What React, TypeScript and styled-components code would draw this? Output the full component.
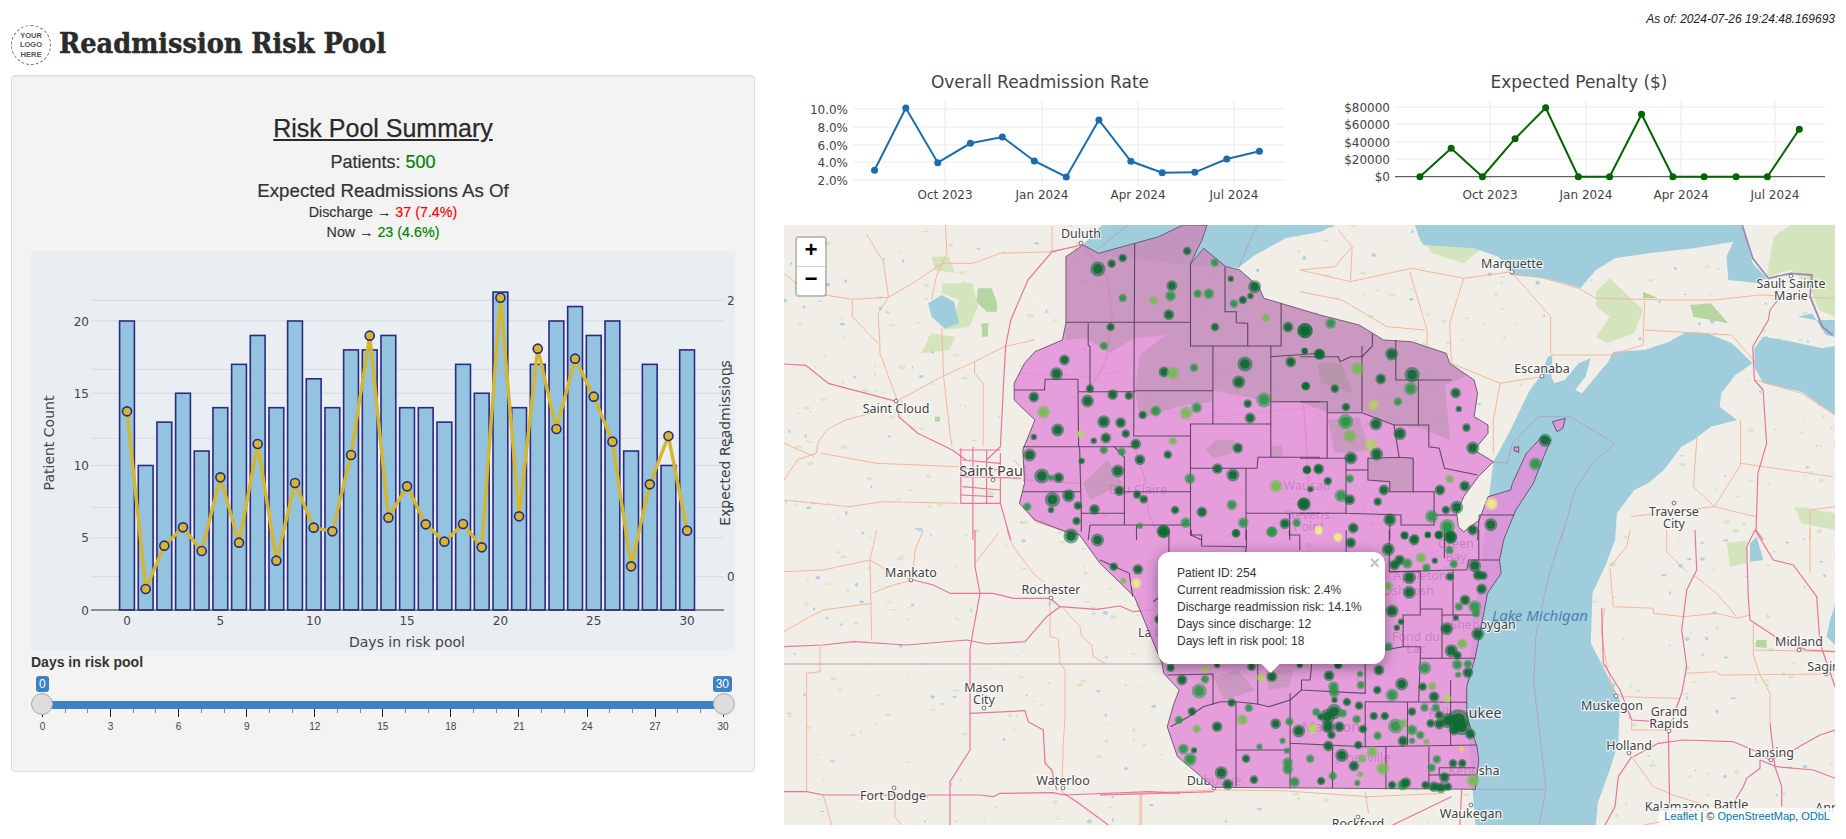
import styled, { createGlobalStyle } from "styled-components";

type Pt = number[];

// map pieces were traced per area of the map, each area has its own offset and x scale
const area = (ox: number, oy: number, sx: number) => (flat: number[]): Pt[] => {
  const out: Pt[] = [];
  for (let i = 0; i < flat.length; i += 2) out.push([ox + flat[i] * sx, oy + flat[i + 1] / 3]);
  return out;
};
const W = area(780, 220, 0.3444);
const E = area(1300, 220, 0.3482);
const S = area(1100, 530, 0.3444);
const SW = area(780, 530, 1 / 3);
const SE = area(1600, 530, 1 / 3);
const PAGE = (flat: number[]): Pt[] => area(0, 0, 1)(flat.map((v, i) => (i % 2 ? v * 3 : v)));

const d = (pts: Pt[], closed = false) =>
  "M" + pts.map((p) => `${p[0].toFixed(1)} ${p[1].toFixed(1)}`).join("L") + (closed ? "Z" : "");

const WISCONSIN = d(
  [
    ...W([830, 110, 880, 75, 925, 100, 1030, 70, 1100, 50, 1170, 15, 1240, 15, 1225, 60, 1190, 135, 1230, 85, 1295, 140, 1335, 150, 1390, 200, 1405, 235, 1568, 285]),
    ...E([170, 315, 240, 360, 320, 365, 420, 400, 430, 430, 500, 480, 510, 520, 500, 590, 540, 615, 540, 640, 500, 690, 555, 725, 512, 770, 470, 830, 450, 880, 455, 920, 470, 935, 515, 900, 540, 830, 605, 810, 610, 790, 650, 700, 695, 650, 720, 660, 700, 710, 670, 790, 620, 870, 600, 920, 585, 960]),
    ...S([1160, 90, 1165, 130, 1125, 190, 1105, 300, 1090, 380, 1065, 470, 1065, 560, 1095, 650, 1100, 690, 1090, 778, 330, 772, 260, 710, 225, 680, 195, 590, 215, 520, 230, 480, 185, 430, 180, 400, 100, 200, 0, 100]),
    ...W([870, 945, 830, 935, 740, 900, 695, 850, 710, 790, 705, 690, 740, 600, 680, 540, 680, 490, 710, 430, 740, 395, 820, 360, 830, 310]),
  ],
  true
);
const WASHINGTON_ISLAND = d(E([725, 605, 762, 595, 755, 625, 738, 635]), true);
const CHAMBERS_ISLAND = d(E([615, 682, 628, 680, 628, 697, 615, 692]), true);

const NORTH_SHADE = d(
  [
    ...PAGE([1060, 222, 1480, 222, 1480, 370, 1445, 385, 1450, 440, 1420, 428, 1394, 425, 1363, 412, 1327, 412, 1300, 402, 1271, 402, 1212, 390, 1212, 402, 1185, 405, 1140, 418, 1135, 390, 1140, 355, 1166, 335, 1134, 338, 1110, 353, 1086, 338, 1066, 340]),
  ],
  true
);
const SHADE_PATCHES = [
  d(PAGE([1368, 458, 1413, 458, 1413, 492, 1390, 492, 1390, 482, 1368, 480]), true),
  d(W([1235, 690, 1265, 660, 1320, 660, 1310, 700, 1260, 715]), true),
  d(W([880, 790, 950, 720, 995, 790, 900, 840]), true),
  d(W([1425, 680, 1455, 675, 1462, 710, 1425, 712]), true),
  d(S([330, 440, 400, 420, 450, 480, 360, 510]), true),
  d(S([480, 420, 560, 420, 550, 470, 490, 480]), true),
  d(E([50, 430, 120, 430, 150, 520, 60, 490]), true),
  d(E([80, 600, 170, 590, 200, 690, 100, 700]), true),
];

const COUNTY_LINES = [
  W([830, 307, 1192, 307]),
  W([1030, 70, 1027, 650]),
  W([1192, 135, 1192, 378, 1425, 378]),
  W([895, 310, 895, 375, 900, 380, 900, 512]),
  W([1292, 140, 1292, 275, 1325, 275, 1325, 308, 1358, 310, 1358, 378]),
  W([1455, 250, 1455, 378, 1425, 378]),
  W([1257, 378, 1257, 612]),
  W([1425, 378, 1425, 712]),
  W([1425, 410, 1568, 400]),
  W([1425, 545, 1568, 545]),
  W([1030, 512, 1257, 512]),
  W([680, 510, 768, 510, 770, 478, 865, 478, 867, 680]),
  W([867, 515, 1030, 515]),
  W([705, 680, 1030, 680]),
  W([870, 680, 875, 880, 1000, 880]),
  W([1030, 648, 1192, 648, 1192, 612, 1425, 612]),
  W([1192, 648, 1192, 745, 1385, 745, 1388, 712, 1568, 712]),
  W([970, 680, 1000, 712, 1000, 915]),
  W([705, 815, 873, 815]),
  W([1000, 815, 1192, 815]),
  W([1192, 745, 1192, 945, 1225, 960]),
  W([1353, 745, 1353, 960]),
  W([1353, 880, 1568, 880]),
  W([875, 880, 875, 935]),
  W([900, 915, 1192, 915]),
  W([900, 915, 895, 960]),
  W([1035, 915, 1035, 960]),
  W([1480, 880, 1480, 960]),
  E([0, 410, 110, 410, 115, 425, 145, 410, 178, 410, 208, 378, 208, 340]),
  E([178, 378, 178, 575]),
  E([275, 360, 275, 480, 435, 480]),
  E([340, 480, 340, 615]),
  E([0, 545, 78, 545, 78, 715]),
  E([78, 578, 178, 578, 270, 615, 370, 615, 370, 680, 400, 685, 415, 745, 510, 765]),
  E([270, 615, 285, 712, 325, 715, 325, 815, 258, 815, 258, 785, 195, 780, 195, 715, 285, 712]),
  E([0, 715, 132, 715, 132, 880, 290, 885, 290, 915, 385, 915, 385, 815, 325, 815]),
  E([132, 750, 195, 750]),
  E([0, 880, 132, 880]),
  E([385, 885, 450, 885]),
  E([258, 915, 258, 960]),
  E([515, 885, 615, 885]),
  E([515, 885, 510, 960]),
  S([200, 0, 200, 80]),
  S([265, 0, 265, 15, 295, 15, 295, 48, 425, 50, 425, 0]),
  S([425, 50, 420, 85]),
  S([550, 0, 550, 15, 580, 15, 580, 60]),
  S([715, 0, 715, 65]),
  S([840, 0, 840, 125, 930, 125, 930, 255, 880, 255, 880, 350, 770, 370, 770, 490, 585, 480, 585, 450, 610, 450, 615, 400]),
  S([840, 125, 1025, 120, 1025, 255]),
  S([1025, 120, 1065, 120, 1070, 90, 1160, 90]),
  S([1000, 85, 1000, 0]),
  S([1100, 90, 1100, 0]),
  S([930, 237, 993, 237, 993, 385, 1090, 385]),
  S([993, 255, 1095, 255]),
  S([880, 350, 930, 350, 930, 385, 993, 385]),
  S([930, 385, 925, 515]),
  S([1018, 450, 1018, 515]),
  S([770, 515, 1065, 517]),
  S([893, 517, 893, 645]),
  S([770, 515, 770, 650]),
  S([1018, 515, 1018, 645]),
  S([552, 490, 552, 640, 770, 650, 1095, 645]),
  S([395, 515, 395, 770]),
  S([395, 660, 552, 660]),
  S([552, 640, 552, 775]),
  S([675, 650, 675, 775]),
  S([830, 650, 830, 778]),
  S([955, 650, 955, 775]),
  S([955, 735, 1090, 735]),
  S([985, 735, 985, 713, 1090, 713]),
  S([195, 435, 328, 432, 328, 525]),
  S([458, 400, 458, 525]),
  S([205, 590, 255, 562, 300, 530, 350, 515, 395, 515, 458, 522, 490, 530, 552, 510, 585, 480]),
  S([0, 90, 85, 130, 95, 200]),
  S([155, 215, 185, 190]),
].map((l) => d(l));

const WATER = [
  d(PAGE([1083, 245, 1102, 225, 1335, 225, 1320, 232, 1286, 238, 1255, 255, 1238, 268, 1226, 267, 1190, 265, 1100, 255]), true),
  d(E([330, 15, 345, 60, 355, 75, 500, 85, 570, 110, 605, 165, 700, 175, 760, 190, 805, 205, 850, 150, 905, 115, 1000, 100, 1130, 85, 1245, 65, 1225, 110, 1230, 180, 1320, 190, 1340, 175, 1300, 130, 1270, 15]), true),
  d(
    [
      ...E([555, 725, 600, 640, 660, 510, 690, 470, 712, 410, 725, 405, 722, 470, 730, 490, 760, 480, 800, 430, 835, 415, 820, 470, 790, 510, 810, 520, 885, 425, 900, 395, 990, 390, 1060, 365, 1110, 335, 1170, 340, 1240, 370, 1300, 430, 1250, 465, 1210, 520, 1205, 560, 1255, 600, 1180, 620, 1130, 660, 1095, 680, 1045, 750, 1000, 790, 960, 810, 910, 880, 905, 960]),
      ...S([1470, 100, 1430, 190, 1425, 340, 1470, 430, 1510, 510, 1505, 640, 1480, 720, 1445, 820, 1440, 885, 1090, 885, 1060, 500]),
    ],
    true
  ),
  d(E([1305, 440, 1305, 385, 1330, 350, 1400, 362, 1500, 385, 1536, 378, 1536, 585, 1440, 515, 1330, 490]), true),
  d(E([1430, 290, 1470, 280, 1510, 345, 1536, 350, 1536, 300, 1480, 300]), true),
  d(SE([690, 270, 705, 225, 705, 345, 680, 320]), true),
  d(W([430, 250, 470, 225, 505, 245, 520, 310, 480, 325, 440, 290]), true),
  d(SE([450, 40, 470, 20, 490, 90, 450, 95]), true),
];

const FOREST_LIGHT = [
  E([345, 50, 400, 15, 500, 20, 550, 60, 470, 130, 380, 100]),
  E([850, 215, 890, 175, 940, 225, 985, 270, 960, 340, 880, 370, 850, 350, 890, 290, 850, 260]),
  E([1340, 170, 1360, 50, 1410, 15, 1536, 15, 1536, 290, 1490, 270, 1465, 200, 1410, 150]),
  E([1075, 530, 1105, 475, 1105, 530]),
  E([1350, 440, 1400, 470, 1360, 470]),
  E([1420, 860, 1536, 880, 1536, 930, 1440, 910]),
  W([470, 190, 560, 190, 575, 260, 550, 320, 480, 330, 450, 300, 500, 310, 520, 240, 470, 220]),
  W([410, 400, 440, 340, 510, 350, 490, 390]),
  W([440, 110, 490, 110, 510, 160, 450, 150]),
  SE([380, 40, 440, 30, 440, 100, 390, 110]),
].map((l) => d(l, true));

const FOREST_DARK = [
  W([575, 205, 615, 205, 630, 250, 630, 275, 600, 275, 570, 245]),
  W([585, 310, 605, 310, 603, 350, 587, 350]),
  W([450, 590, 465, 590, 465, 605, 450, 605]),
  E([985, 215, 1030, 235, 985, 235]),
  E([1120, 255, 1180, 250, 1230, 310, 1130, 290]),
  SE([470, 330, 500, 330, 500, 355, 465, 350]),
].map((l) => d(l, true));

const MINOR_ROADS = [
  W([12, 160, 45, 190, 130, 225, 210, 238, 315, 232, 400, 180, 470, 130, 560, 130, 640, 100, 790, 95, 875, 75]),
  W([250, 40, 300, 125, 315, 232, 285, 280, 290, 375, 290, 400, 340, 540, 345, 590]),
  W([210, 238, 210, 290, 285, 370]),
  W([480, 15, 485, 100, 455, 165, 440, 240]),
  W([790, 20, 790, 95]),
  W([470, 325, 475, 470, 495, 650, 500, 680]),
  W([345, 540, 470, 470, 565, 425, 650, 380, 740, 360]),
  W([565, 425, 565, 460, 590, 490, 590, 680]),
  W([12, 840, 200, 860, 300, 845, 520, 850]),
  W([12, 780, 50, 720, 105, 700, 110, 670, 135, 630, 190, 600, 300, 570]),
  W([12, 670, 100, 710]),
  W([120, 700, 280, 730, 520, 740]),
  W([700, 850, 740, 905, 830, 935]),
  W([680, 720, 730, 780, 870, 790, 1000, 800]),
  W([1030, 510, 1180, 600, 1560, 560]),
  W([700, 460, 900, 470, 1000, 450]),
  SW([12, 125, 130, 120, 270, 90, 330, 125, 400, 150]),
  SW([270, 90, 275, 330]),
  SW([12, 305, 90, 260, 130, 240, 275, 220]),
  SW([275, 190, 340, 165, 400, 150]),
  SW([430, 0, 405, 60, 400, 120]),
  SW([290, 0, 270, 90]),
  SW([120, 350, 120, 425, 80, 430, 80, 785]),
  SW([130, 795, 155, 885]),
  SW([345, 800, 345, 860, 365, 885]),
  SW([810, 205, 810, 320, 835, 325, 840, 400, 855, 420, 855, 560, 850, 640, 845, 790]),
  SW([850, 235, 900, 290, 905, 320, 935, 345, 940, 380, 975, 400]),
  SW([680, 0, 700, 50, 760, 130, 795, 160, 810, 205]),
  SW([655, 10, 600, 80, 585, 100]),
  SW([1080, 790, 1080, 885]),
  SE([30, 115, 40, 230, 160, 235, 160, 250, 250, 260, 350, 250, 410, 265, 450, 255]),
  SE([280, 135, 350, 190, 410, 260]),
  SE([200, 0, 200, 65, 260, 125]),
  SE([630, 0, 630, 130]),
  SE([260, 430, 350, 425, 360, 435, 700, 432]),
  SE([460, 280, 460, 375, 480, 435, 510, 490, 510, 580]),
  SE([30, 110, 80, 50, 90, 0]),
  SE([60, 500, 240, 505]),
  SE([95, 570, 95, 600, 200, 600]),
  SE([95, 680, 160, 770, 220, 795, 330, 830]),
  SE([130, 885, 210, 870]),
  SE([460, 360, 705, 365]),
  E([0, 150, 100, 140, 150, 80, 110, 30]),
  E([150, 80, 145, 185, 0, 150]),
  E([145, 185, 320, 145, 470, 175, 610, 155, 700, 175, 800, 205, 850, 235, 1060, 240, 1190, 240, 1320, 225, 1536, 235]),
  E([315, 155, 365, 330, 365, 380]),
  E([470, 175, 430, 310, 435, 430, 575, 490, 695, 470]),
  E([575, 490, 555, 600, 555, 700]),
  E([610, 160, 720, 290, 720, 400]),
  E([720, 405, 890, 405, 985, 375, 990, 240]),
  E([990, 330, 1240, 345, 1310, 430]),
  E([0, 215, 120, 240, 250, 320, 360, 330]),
  E([950, 890, 1190, 860, 1310, 890]),
  E([1140, 650, 1130, 800, 1190, 860]),
  E([1265, 730, 1530, 770]),
  E([1265, 600, 1265, 735, 1190, 860]),
  E([1465, 960, 1465, 870, 1536, 860]),
  E([1310, 480, 1440, 520, 1536, 585]),
  S([0, 795, 120, 790, 330, 780]),
  S([120, 790, 120, 885]),
  S([770, 785, 780, 850]),
  S([330, 780, 530, 782, 780, 800, 1000, 790]),
  S([1465, 235, 1455, 300, 1470, 400, 1495, 500]),
].map((l) => d(l));

const MAJOR_ROADS = [
  W([12, 432, 75, 436, 140, 490, 250, 520, 340, 545, 345, 590, 400, 640, 500, 690, 540, 720]),
  W([875, 75, 790, 95, 720, 180, 670, 300, 655, 380, 650, 470, 640, 680, 600, 720]),
  W([520, 690, 640, 690]),
  W([525, 770, 700, 775]),
  W([525, 685, 525, 850, 640, 850]),
  W([560, 680, 560, 960]),
  W([600, 690, 600, 850]),
  W([640, 700, 640, 850, 670, 960]),
  W([530, 720, 640, 730]),
  W([525, 745, 640, 750]),
  W([530, 800, 640, 810]),
  W([525, 825, 620, 830]),
  W([880, 75, 950, 170, 965, 290, 945, 430, 900, 500]),
  W([1030, 680, 1060, 780, 1070, 880, 1100, 950]),
  W([1520, 550, 1530, 700, 1540, 880]),
  W([705, 780, 870, 790]),
  SW([12, 350, 130, 345, 220, 335, 380, 345, 560, 330, 620, 342, 735, 335, 800, 260, 840, 230, 950, 238, 1020, 228, 1060, 245, 1110, 240]),
  SW([585, 0, 585, 110, 600, 190, 580, 300, 570, 360, 570, 550, 570, 660, 510, 755, 510, 885]),
  SW([400, 150, 460, 165, 510, 190, 640, 190, 700, 205, 810, 205, 840, 230]),
  SW([12, 785, 80, 785, 130, 795, 600, 795, 640, 800, 660, 790, 820, 788, 850, 795, 1110, 785, 1200, 790]),
  SW([850, 790, 890, 815, 985, 885]),
  SW([570, 550, 735, 542, 745, 575, 790, 600, 795, 700, 815, 720, 830, 780]),
  SE([465, 0, 440, 50, 445, 200, 450, 270, 510, 310, 540, 330, 620, 360, 705, 365]),
  SE([465, 0, 520, 90, 580, 105, 650, 200, 660, 340, 705, 470]),
  SE([285, 0, 290, 120, 260, 180, 245, 300, 260, 410, 245, 490, 205, 600, 210, 885]),
  SE([5, 235, 10, 400, 60, 480, 95, 570, 170, 575]),
  SE([100, 680, 175, 640, 250, 630, 400, 635, 460, 660, 510, 690, 580, 660, 660, 615, 705, 600]),
  SE([480, 690, 530, 710, 640, 720, 705, 745]),
  SE([510, 580, 525, 710, 545, 770, 545, 830]),
  SE([480, 690, 480, 715, 440, 745, 430, 770, 400, 820, 380, 870]),
  SE([95, 680, 55, 740, 45, 830, 15, 885]),
  E([1380, 230, 1350, 270, 1345, 300, 1300, 380, 1305, 480, 1330, 510, 1340, 670, 1315, 760, 1310, 930, 1330, 960]),
  S([1050, 780, 1045, 885]),
  S([850, 885, 960, 830, 1020, 800]),
  S([330, 785, 120, 792, 0, 795]),
].map((l) => d(l));

const BORDERS = [
  E([555, 725, 595, 730, 610, 670, 685, 590, 775, 590, 905, 670, 840, 730, 790, 810, 750, 960]),
  S([1345, 0, 1300, 150, 1265, 320, 1260, 460, 1295, 775, 1275, 885]),
  S([1090, 778, 1295, 778]),
  W([1010, 15, 920, 90]),
  W([1385, 15, 1330, 145]),
].map((l) => d(l));
const STATE_LINE = d(SW([12, 402, 1150, 402]));
const SOO_LINE = d(E([1270, 15, 1300, 115, 1345, 175, 1410, 160, 1470, 165, 1465, 230, 1500, 320, 1530, 345]));

type Speck = { x: number; y: number; w: number; h: number; blue: boolean };
const makeSpecks = (): Speck[] => {
  let seed = 4177;
  const rnd = () => {
    seed = (seed * 16807) % 2147483647;
    return seed / 2147483647;
  };
  return Array.from({ length: 900 }, () => {
    const blue = rnd() < 0.35;
    return {
      x: 784 + rnd() * 1051,
      y: 225 + rnd() * 600,
      w: 0.6 + rnd() * (blue ? 2.2 : 3.2),
      h: 0.5 + rnd() * 1.6,
      blue,
    };
  });
};
const SPECKS = makeSpecks();

type Shade = "d" | "m" | "l" | "g" | "L" | "Y" | "O";
const SHADES: Record<Shade, string> = {
  d: "#0a6a2f",
  m: "#2c9648",
  l: "#73bb52",
  g: "#1f9a3c",
  L: "#b4d465",
  Y: "#efeb86",
  O: "#f8c46c",
};

type RawDot = [number, number, number, Shade];
const WEST_DOTS: RawDot[] = [[923,147,7,"d"],[963,131,4,"d"],[995,114,4,"d"],[1182,93,4,"d"],[1262,128,4,"m"],[1138,197,5,"d"],[1134,228,5,"m"],[995,234,4,"m"],[1085,242,4,"l"],[1129,284,5,"d"],[1213,221,4,"m"],[1245,221,5,"m"],[1309,176,3,"d"],[1378,200,6,"d"],[1366,228,3,"d"],[1344,240,4,"d"],[1318,251,4,"m"],[1411,293,4,"l"],[1263,321,4,"d"],[960,321,4,"d"],[940,378,4,"m"],[1475,321,5,"d"],[1524,332,7,"d"],[1524,393,3,"d"],[1565,402,5,"d"],[1483,426,5,"d"],[826,420,5,"d"],[803,461,6,"d"],[1115,456,5,"d"],[1141,459,6,"l"],[1202,443,4,"m"],[1350,432,7,"d"],[1332,486,6,"d"],[1526,498,4,"d"],[900,506,4,"d"],[966,524,5,"d"],[1013,527,4,"d"],[737,531,5,"d"],[893,543,6,"d"],[765,576,6,"l"],[1053,585,4,"d"],[1091,573,5,"m"],[1179,579,6,"l"],[1210,563,5,"m"],[1358,551,4,"d"],[1405,540,7,"m"],[1365,594,5,"d"],[940,605,6,"d"],[989,608,5,"d"],[806,630,6,"d"],[873,642,4,"L"],[737,651,3,"d"],[1004,641,4,"d"],[911,662,3,"d"],[946,654,5,"d"],[1033,672,5,"d"],[1141,663,4,"l"],[940,690,4,"m"],[992,695,4,"m"],[725,705,6,"d"],[1329,684,5,"d"],[1126,704,4,"d"],[876,723,3,"d"],[1045,719,5,"d"],[981,753,6,"d"],[1270,746,5,"d"],[1315,765,6,"d"],[760,768,7,"d"],[787,773,3,"m"],[809,773,5,"d"],[1530,750,4,"d"],[1562,746,4,"m"],[1190,776,5,"m"],[1440,798,6,"l"],[985,812,5,"d"],[838,827,6,"d"],[1037,824,4,"d"],[1056,838,4,"d"],[791,839,7,"d"],[865,857,4,"d"],[718,860,4,"m"],[787,870,3,"d"],[1147,870,4,"d"],[1225,876,5,"d"],[1312,855,5,"m"],[1520,852,6,"d"],[913,868,5,"d"],[861,903,4,"d"],[1178,908,5,"m"],[1113,933,6,"d"],[1045,917,3,"m"],[1345,908,5,"m"],[1427,936,5,"m"],[1466,911,5,"d"],[1500,908,4,"m"],[1324,939,4,"m"],[845,948,7,"d"],[922,960,6,"d"]];
const EAST_DOTS: RawDot[] = [[88,310,5,"m"],[15,332,7,"d"],[263,402,6,"d"],[57,403,5,"d"],[13,393,3,"d"],[322,464,7,"d"],[165,446,6,"l"],[232,477,5,"d"],[318,506,6,"m"],[17,498,4,"d"],[100,506,4,"d"],[447,519,5,"d"],[211,555,5,"L"],[281,545,4,"m"],[132,561,4,"d"],[456,567,3,"d"],[131,605,7,"g"],[218,612,6,"d"],[478,623,4,"d"],[287,641,6,"d"],[143,648,6,"l"],[204,675,6,"L"],[496,684,6,"d"],[220,702,6,"d"],[704,661,6,"d"],[146,714,6,"d"],[676,732,6,"m"],[20,749,4,"d"],[54,747,5,"d"],[143,776,4,"g"],[80,783,4,"d"],[430,777,4,"l"],[473,798,5,"d"],[241,810,5,"d"],[402,810,5,"d"],[30,808,3,"d"],[118,827,6,"m"],[143,839,5,"d"],[223,845,4,"d"],[12,852,6,"d"],[550,851,6,"Y"],[450,862,6,"d"],[419,870,4,"d"],[378,889,6,"m"],[258,899,6,"d"],[423,920,7,"g"],[548,914,6,"d"],[153,924,5,"d"],[496,930,5,"d"],[54,929,4,"Y"],[109,952,4,"Y"],[300,946,4,"d"],[367,945,3,"d"],[398,945,4,"d"],[432,950,6,"d"],[330,955,4,"m"]];
const SOUTH_DOTS: RawDot[] = [[185,5,6,"d"],[395,10,4,"d"],[500,5,5,"m"],[635,3,4,"Y"],[690,22,4,"Y"],[728,38,5,"d"],[885,17,3,"d"],[912,30,5,"d"],[952,14,3,"d"],[985,15,4,"d"],[1018,22,6,"d"],[1015,60,4,"m"],[837,58,6,"d"],[932,83,5,"l"],[870,90,5,"d"],[892,100,5,"m"],[855,105,5,"d"],[972,92,3,"d"],[1027,102,4,"m"],[1088,107,6,"d"],[948,113,4,"m"],[1098,135,5,"d"],[1113,137,4,"d"],[898,143,6,"d"],[1016,140,4,"d"],[838,168,4,"l"],[898,187,6,"d"],[1108,177,5,"d"],[1060,210,5,"d"],[1042,230,4,"m"],[1088,230,6,"m"],[848,243,6,"d"],[1092,250,4,"m"],[874,275,3,"d"],[862,293,3,"d"],[1033,263,3,"d"],[1007,296,6,"d"],[1097,312,6,"d"],[1052,341,5,"l"],[1020,362,6,"d"],[1038,376,4,"d"],[838,350,4,"m"],[1037,404,5,"m"],[1068,402,4,"m"],[943,414,6,"m"],[810,420,5,"d"],[1040,434,3,"m"],[1068,428,5,"d"],[755,432,3,"m"],[665,437,5,"d"],[692,405,4,"d"],[876,462,6,"d"],[937,470,4,"d"],[965,468,4,"l"],[757,465,4,"m"],[678,470,5,"m"],[680,487,5,"m"],[805,480,4,"d"],[848,495,6,"m"],[970,500,5,"d"],[1008,505,4,"L"],[717,516,4,"d"],[681,510,3,"d"],[752,527,4,"d"],[942,533,4,"m"],[975,533,4,"m"],[906,545,4,"d"],[628,546,4,"m"],[680,545,7,"d"],[660,560,7,"d"],[705,550,4,"m"],[640,560,3,"d"],[795,558,4,"d"],[827,558,4,"d"],[745,568,4,"m"],[985,555,4,"d"],[1040,570,10,"d"],[1010,572,7,"d"],[1050,590,8,"d"],[960,580,4,"d"],[985,582,5,"d"],[1028,600,5,"d"],[858,588,7,"m"],[880,580,4,"l"],[906,600,5,"m"],[695,590,5,"d"],[662,590,6,"d"],[763,597,4,"d"],[618,596,5,"L"],[577,603,6,"d"],[550,575,4,"m"],[510,581,5,"d"],[413,569,5,"l"],[432,534,4,"m"],[382,518,4,"d"],[288,483,7,"m"],[238,450,5,"d"],[305,448,4,"m"],[267,544,4,"d"],[229,570,4,"m"],[281,597,4,"l"],[340,590,5,"d"],[530,632,3,"m"],[672,615,4,"d"],[806,617,4,"m"],[930,615,4,"m"],[880,633,5,"d"],[906,632,3,"m"],[948,635,3,"l"],[1075,612,5,"d"],[750,645,4,"d"],[663,648,5,"d"],[463,650,3,"m"],[543,662,3,"m"],[242,657,5,"m"],[273,661,3,"d"],[262,688,6,"g"],[610,686,4,"m"],[424,686,4,"d"],[545,698,5,"m"],[702,676,6,"d"],[790,665,5,"l"],[760,686,4,"l"],[737,708,5,"d"],[978,688,4,"m"],[1025,700,4,"d"],[1052,700,4,"d"],[1050,657,3,"O"],[821,716,6,"l"],[963,713,4,"m"],[545,718,5,"m"],[352,728,6,"d"],[447,749,4,"d"],[371,763,5,"d"],[676,738,4,"m"],[642,753,4,"d"],[565,756,5,"m"],[755,733,3,"l"],[747,759,3,"m"],[1000,742,5,"d"],[1083,752,6,"l"],[848,765,4,"d"],[878,765,5,"g"],[888,758,5,"d"],[945,765,4,"d"],[970,770,5,"d"],[990,773,5,"d"],[1010,770,4,"d"],[205,413,4,"d"],[306,417,4,"L"],[340,405,3,"d"],[440,410,4,"d"],[467,443,4,"L"],[499,440,5,"d"],[580,405,3,"d"],[690,405,3,"d"],[40,110,4,"d"],[110,118,5,"d"],[68,152,3,"l"],[105,160,5,"Y"],[170,268,4,"d"]];

const DOTS = [
  ...WEST_DOTS.map(([x, y, r, s]) => ({ x: 780 + x * 0.3444, y: 220 + y / 3, r, s })),
  ...EAST_DOTS.map(([x, y, r, s]) => ({ x: 1300 + x * 0.3482, y: 220 + y / 3, r, s })),
  ...SOUTH_DOTS.map(([x, y, r, s]) => ({ x: 1100 + x * 0.3444, y: 530 + y / 3, r, s })),
];

const CITIES: [string, number, number][] = [
  ["Duluth", 1081, 238], ["Saint Cloud", 896, 413], ["Marquette", 1512, 268], ["Escanaba", 1542, 373],
  ["Sault Sainte", 1791, 288], ["Marie", 1791, 300], ["Traverse", 1674, 516], ["City", 1674, 528],
  ["Mankato", 911, 577], ["Rochester", 1051, 594], ["Mason", 984, 692], ["City", 984, 704],
  ["Fort Dodge", 893, 800], ["Waterloo", 1063, 785], ["Dubuque", 1214, 785], ["Eau Claire", 1138, 494],
  ["Wausau", 1307, 490], ["Stevens", 1307, 519], ["Point", 1309, 531], ["Green", 1456, 548], ["Bay", 1456, 561],
  ["Appleton", 1420, 580], ["Oshkosh", 1408, 595], ["Fond du", 1416, 641], ["Lac", 1416, 653],
  ["Sheboygan", 1483, 629], ["Janesville", 1363, 762], ["Kenosha", 1474, 775], ["Waukegan", 1471, 818],
  ["Rockford", 1358, 828], ["Muskegon", 1612, 710], ["Grand", 1669, 716], ["Rapids", 1669, 728],
  ["Holland", 1629, 750], ["Midland", 1799, 646], ["Saginaw", 1832, 671], ["Lansing", 1771, 757],
  ["Kalamazoo", 1677, 811], ["Battle", 1731, 809], ["Ann", 1827, 812], ["La Crosse", 1166, 637],
];
const BIG_CITIES: [string, number, number][] = [
  ["Saint Paul", 993, 476], ["Milwaukee", 1465, 718], ["Madison", 1331, 732],
];
const TOWN_MARKS: Pt[] = [[1081,243],[896,401],[993,480],[1512,272],[1542,376],[1791,276],[1674,503],[911,580],[1051,598],[984,708],[894,788],[1063,788],[1214,788],[1629,753],[1616,696],[1669,731],[1771,760],[1799,650],[1826,674],[1358,817],[1471,805],[1309,479],[1309,545]];

const COUNTS = [20, 10, 13, 15, 11, 14, 17, 19, 14, 20, 16, 14, 18, 18, 19, 14, 14, 13, 17, 15, 22, 14, 17, 20, 21, 19, 20, 11, 17, 10, 18];
const EXPECTED = [484, 1017, 887, 832, 903, 682, 878, 582, 932, 699, 833, 844, 615, 257, 803, 709, 823, 875, 822, 892, 143, 799, 296, 537, 326, 440, 575, 949, 703, 558, 842];
const dayX = (day: number) => 127 + day * 18.67;
const countY = (n: number) => 610 - n * 14.45;
const EXPECTED_PTS = EXPECTED.map((v, i) => [dayX(i), 250 + v / 3]);

const RATE_PTS = [139,511,185,324,232,488,280,430,327,411,374,483,421,531,469,360,516,484,562,518,610,517,657,477,705,454];
const PENALTY_PTS = [941,530,987,445,1033,530,1081,416,1126,323,1174,530,1220,530,1267,343,1313,530,1359,530,1406,530,1452,530,1499,388];
const chartPts = (flat: number[]) => area(780, 0, 0.68)(flat);

type TrendProps = {
  title: string;
  titleX: number;
  viewX: number;
  left: number;
  right: number;
  color: string;
  points: Pt[];
  yTicks: [string, number][];
  xTicks: [string, number][];
  zeroY?: number;
};

const TrendChart = ({ title, titleX, viewX, left, right, color, points, yTicks, xTicks, zeroY }: TrendProps) => {
  return (
    <TrendSvg viewBox={`${viewX} 70 525 155`}>
      <TrendTitle x={titleX} y={88}>{title}</TrendTitle>
      {xTicks.map(([label, x]) => (
        <g key={label}>
          <GridLine x1={x} x2={x} y1={100} y2={186} />
          <TickText x={x} y={199} $anchor="middle">{label}</TickText>
        </g>
      ))}
      {yTicks.map(([label, y]) => (
        <g key={label}>
          <GridLine x1={left} x2={right} y1={y} y2={y} />
          <TickText x={left - 5} y={y + 4.5} $anchor="end">{label}</TickText>
        </g>
      ))}
      {zeroY !== undefined && <ZeroLine x1={left} x2={right} y1={zeroY} y2={zeroY} />}
      <path d={d(points)} fill="none" stroke={color} strokeWidth={2} />
      {points.map((p, i) => (
        <circle key={i} cx={p[0]} cy={p[1]} r={3.5} fill={color} />
      ))}
    </TrendSvg>
  );
};

const RiskChart = () => {
  return (
    <RiskSvg viewBox="31 251 703 400">
      {[980, 772, 565, 358, 151].map((z) => (
        <RiskGrid key={z} x1={91} x2={724} y1={250 + z / 3} y2={250 + z / 3} />
      ))}
      {[5, 10, 15, 20].map((n) => (
        <RiskGrid key={n} x1={91} x2={724} y1={countY(n)} y2={countY(n)} />
      ))}
      {[0, 5, 10, 15, 20].map((n) => (
        <TickText key={n} x={89} y={countY(n) + 4.5} $anchor="end">{n}</TickText>
      ))}
      {[0, 5, 10, 15, 20].map((n, i) => (
        <TickText key={n} x={727} y={250 + [980, 772, 565, 358, 151][i] / 3 + 4.5} $anchor="start">{n}</TickText>
      ))}
      {COUNTS.map((n, i) => (
        <Bar key={i} x={dayX(i) - 7.4} y={countY(n)} width={14.8} height={n * 14.45} />
      ))}
      <AxisLine x1={91} x2={724} y1={610} y2={610} />
      {[0, 5, 10, 15, 20, 25, 30].map((n) => (
        <TickText key={n} x={dayX(n)} y={625} $anchor="middle">{n}</TickText>
      ))}
      <AxisTitle x={407} y={647}>Days in risk pool</AxisTitle>
      <AxisTitle transform="translate(54 443) rotate(-90)">Patient Count</AxisTitle>
      <AxisTitle transform="translate(730 443) rotate(-90)">Expected Readmissions</AxisTitle>
      <path d={d(EXPECTED_PTS)} fill="none" stroke="#d4b72f" strokeWidth={3.4} />
      {EXPECTED_PTS.map((p, i) => (
        <Marker key={i} cx={p[0]} cy={p[1]} r={4.5} />
      ))}
    </RiskSvg>
  );
};

const DaySlider = () => {
  const days = Array.from({ length: 31 }, (_, i) => i);
  return (
    <SliderWrap>
      <SliderLabel>Days in risk pool</SliderLabel>
      <Rail>
        <Handle $side="left" />
        <Handle $side="right" />
        <Bubble $side="left">0</Bubble>
        <Bubble $side="right">30</Bubble>
      </Rail>
      <TickRow>
        {days.map((day) => (
          <TickCol key={day}>
            <TickMark $major={day % 3 === 0} />
            {day % 3 === 0 && <TickLabel>{day}</TickLabel>}
          </TickCol>
        ))}
      </TickRow>
    </SliderWrap>
  );
};

const WisconsinMap = () => {
  return (
    <MapSvg viewBox="784 225 1051 600">
      <rect x={784} y={225} width={1051} height={600} fill="#f1eee8" />
      {SPECKS.map((s, i) => (
        <ellipse key={i} cx={s.x} cy={s.y} rx={s.w} ry={s.h} fill={s.blue ? "#aed3e2" : "#d9e8c2"} />
      ))}
      {FOREST_LIGHT.map((p, i) => (
        <path key={i} d={p} fill="#cfe3b6" opacity={0.85} />
      ))}
      {FOREST_DARK.map((p, i) => (
        <path key={i} d={p} fill="#b7d5a1" />
      ))}
      {WATER.map((p, i) => (
        <path key={i} d={p} fill="#a0cddb" />
      ))}
      {MINOR_ROADS.map((p, i) => (
        <Road key={i} d={p} $color="#f6b79a" $width={1} />
      ))}
      {MAJOR_ROADS.map((p, i) => (
        <Road key={i} d={p} $color="#e9759a" $width={1.2} />
      ))}
      {BORDERS.map((p, i) => (
        <Road key={i} d={p} $color="#b59fc0" $width={0.9} />
      ))}
      <Road d={STATE_LINE} $color="#cdb9c6" $width={1.6} />
      <Road d={SOO_LINE} $color="#9a8cb0" $width={1.8} />
      {TOWN_MARKS.map((p, i) => (
        <TownMark key={i} cx={p[0]} cy={p[1]} r={1.9} />
      ))}
      {CITIES.map(([name, x, y], i) => (
        <CityLabel key={i} x={x} y={y}>{name}</CityLabel>
      ))}
      {BIG_CITIES.map(([name, x, y]) => (
        <CityLabel key={name} x={x} y={y} $big>{name}</CityLabel>
      ))}
      <LakeLabel x={1540} y={621}>Lake Michigan</LakeLabel>
      <clipPath id="wi-clip">
        <path d={WISCONSIN} />
      </clipPath>
      <StateShape d={WISCONSIN} />
      <StateShape d={WASHINGTON_ISLAND} />
      <StateShape d={CHAMBERS_ISLAND} />
      <g clipPath="url(#wi-clip)">
        <ShadeShape d={NORTH_SHADE} />
        {SHADE_PATCHES.map((p, i) => (
          <ShadeShape key={i} d={p} />
        ))}
      </g>
      {COUNTY_LINES.map((p, i) => (
        <CountyLine key={i} d={p} />
      ))}
      {DOTS.map((dot, i) => (
        <g key={i}>
          <circle cx={dot.x} cy={dot.y} r={dot.r * 1.08} fill={SHADES[dot.s]} opacity={0.55} />
          <circle cx={dot.x} cy={dot.y} r={dot.r * 0.68} fill={SHADES[dot.s]} opacity={0.85} />
        </g>
      ))}
    </MapSvg>
  );
};

export default function App() {
  return (
    <>
      <GlobalStyle />
      <Page>
        <LeftColumn>
          <Header>
            <Logo>YOUR<br />LOGO<br />HERE</Logo>
            <Title>Readmission Risk Pool</Title>
          </Header>
          <Panel>
            <Summary>Risk Pool Summary</Summary>
            <PatientLine>Patients: <Value $color="#008000">500</Value></PatientLine>
            <ExpectedLine>Expected Readmissions As Of</ExpectedLine>
            <SmallLine>Discharge → <Value $color="#ff0000">37 (7.4%)</Value></SmallLine>
            <SmallLine>Now → <Value $color="#008000">23 (4.6%)</Value></SmallLine>
            <ChartBox>
              <RiskChart />
            </ChartBox>
            <DaySlider />
          </Panel>
        </LeftColumn>
        <RightColumn>
          <Timestamp>As of: 2024-07-26 19:24:48.169693</Timestamp>
          <TrendRow>
            <TrendChart
              title="Overall Readmission Rate"
              titleX={1040}
              viewX={784}
              left={853}
              right={1285}
              color="#1b6cac"
              points={chartPts(RATE_PTS)}
              yTicks={[["10.0%", 109], ["8.0%", 127], ["6.0%", 145], ["4.0%", 162], ["2.0%", 180]]}
              xTicks={[["Oct 2023", 945], ["Jan 2024", 1042], ["Apr 2024", 1138], ["Jul 2024", 1234]]}
            />
            <TrendChart
              title="Expected Penalty ($)"
              titleX={1579}
              viewX={1309}
              left={1395}
              right={1825}
              color="#006400"
              points={chartPts(PENALTY_PTS)}
              yTicks={[["$80000", 107], ["$60000", 124], ["$40000", 142], ["$20000", 159], ["$0", 176.7]]}
              xTicks={[["Oct 2023", 1490], ["Jan 2024", 1586], ["Apr 2024", 1681], ["Jul 2024", 1775]]}
              zeroY={176.7}
            />
          </TrendRow>
          <MapFrame>
            <WisconsinMap />
            <ZoomBar>
              <ZoomButton>+</ZoomButton>
              <ZoomButton>−</ZoomButton>
            </ZoomBar>
            <Popup>
              <PopupClose>×</PopupClose>
              <div>Patient ID: 254</div>
              <div>Current readmission risk: 2.4%</div>
              <div>Discharge readmission risk: 14.1%</div>
              <div>Days since discharge: 12</div>
              <div>Days left in risk pool: 18</div>
            </Popup>
            <Attribution>
              <AttrLink>Leaflet</AttrLink> | © <AttrLink>OpenStreetMap</AttrLink>, <AttrLink>ODbL</AttrLink>
            </Attribution>
          </MapFrame>
        </RightColumn>
      </Page>
    </>
  );
}

const GlobalStyle = createGlobalStyle`
  html, body {
    margin: 0;
    padding: 0;
    background: #fff;
    overflow: hidden;
  }
  body {
    font-family: "Liberation Sans", Arial, sans-serif;
    color: #333;
  }
`;

const Page = styled.div`
  display: flex;
  width: 1846px;
  height: 839px;
  padding: 0 11px;
  box-sizing: border-box;
  gap: 29px;
`;

const LeftColumn = styled.div`
  width: 744px;
  flex: none;
  padding-top: 25px;
`;

const RightColumn = styled.div`
  width: 1051px;
  flex: none;
`;

const Header = styled.div`
  display: flex;
  align-items: center;
  gap: 8px;
  height: 40px;
`;

const Logo = styled.div`
  width: 40px;
  height: 40px;
  box-sizing: border-box;
  flex: none;
  border: 1px dashed #777;
  border-radius: 50%;
  display: flex;
  align-items: center;
  justify-content: center;
  text-align: center;
  font-size: 7.5px;
  line-height: 9.5px;
  font-weight: bold;
  color: #555;
`;

const Title = styled.h1`
  margin: -4px 0 0;
  font-family: "DejaVu Serif", "Liberation Serif", serif;
  font-stretch: condensed;
  font-weight: bold;
  font-size: 28.5px;
  line-height: 40px;
  color: #2b2b2b;
  -webkit-text-stroke: 0.5px #2b2b2b;
  white-space: nowrap;
`;

const Panel = styled.div`
  margin-top: 10px;
  height: 697px;
  box-sizing: border-box;
  padding: 37px 19px 0;
  background: #f3f3f3;
  border: 1px solid #dedede;
  border-radius: 4px;
  box-shadow: inset 0 1px 1px rgba(0, 0, 0, 0.05);
  text-align: center;
`;

const Summary = styled.h2`
  margin: 0;
  font-size: 25px;
  line-height: 30px;
  font-weight: normal;
  text-decoration: underline;
  color: #2a2a2a;
  -webkit-text-stroke: 0.25px #2a2a2a;
`;

const PatientLine = styled.div`
  margin-top: 8px;
  font-size: 18px;
  line-height: 22px;
  -webkit-text-stroke: 0.2px;
`;

const ExpectedLine = styled.div`
  margin-top: 7px;
  font-size: 18.7px;
  line-height: 22px;
  -webkit-text-stroke: 0.2px;
`;

const SmallLine = styled.div`
  font-size: 14.3px;
  line-height: 20px;
  -webkit-text-stroke: 0.15px;
`;

const Value = styled.span<{ $color: string }>`
  color: ${(p) => p.$color};
`;

const ChartBox = styled.div`
  margin-top: 9px;
  height: 400px;
  background: #e9eef2;
`;

const RiskSvg = styled.svg`
  display: block;
  width: 703px;
  height: 400px;
`;

const RiskGrid = styled.line`
  stroke: #d5dae1;
  stroke-width: 1;
`;

const AxisLine = styled.line`
  stroke: #2f2f3a;
  stroke-width: 1;
`;

const Bar = styled.rect`
  fill: #94c3df;
  stroke: #2d2a82;
  stroke-width: 1.6;
`;

const Marker = styled.circle`
  fill: #d4b72f;
  stroke: #2d2a82;
  stroke-width: 1.6;
`;

const TickText = styled.text<{ $anchor: string }>`
  font-family: "DejaVu Sans", Verdana, sans-serif;
  font-size: 12px;
  fill: #444;
  text-anchor: ${(p) => p.$anchor};
`;

const AxisTitle = styled.text`
  font-family: "DejaVu Sans", Verdana, sans-serif;
  font-size: 14px;
  fill: #444;
  text-anchor: middle;
`;

const SliderWrap = styled.div`
  text-align: left;
`;

const SliderLabel = styled.div`
  margin-top: 3px;
  font-size: 14px;
  line-height: 16px;
  font-weight: bold;
`;

const Rail = styled.div`
  position: relative;
  margin: 31px 11px 0;
  height: 8px;
  background: #3d80c4;
`;

const Handle = styled.div<{ $side: "left" | "right" }>`
  position: absolute;
  top: -8px;
  ${(p) => p.$side}: -11px;
  width: 22px;
  height: 22px;
  box-sizing: border-box;
  border-radius: 50%;
  background: #dcdcdc;
  border: 1px solid #aaa;
`;

const Bubble = styled.div<{ $side: "left" | "right" }>`
  position: absolute;
  top: -25px;
  ${(p) => p.$side}: ${(p) => (p.$side === "left" ? "-6px" : "-8px")};
  padding: 0 3px;
  height: 16px;
  line-height: 16px;
  font-size: 12px;
  color: #fff;
  background: #3d80c4;
  border-radius: 3px;
`;

const TickRow = styled.div`
  display: flex;
  justify-content: space-between;
  margin: 0 11px;
`;

const TickCol = styled.div`
  width: 1px;
  display: flex;
  flex-direction: column;
  align-items: center;
`;

const TickMark = styled.div<{ $major: boolean }>`
  width: 1px;
  flex: none;
  height: ${(p) => (p.$major ? "8px" : "4px")};
  background: ${(p) => (p.$major ? "#222" : "#888")};
`;

const TickLabel = styled.div`
  margin-top: 4px;
  font-size: 10px;
  line-height: 12px;
  color: #444;
`;

const Timestamp = styled.div`
  padding-top: 12px;
  height: 14px;
  box-sizing: content-box;
  font-size: 12px;
  line-height: 14px;
  font-style: italic;
  text-align: right;
  color: #222;
`;

const TrendRow = styled.div`
  display: flex;
  margin-top: 44px;
  height: 155px;
`;

const TrendSvg = styled.svg`
  display: block;
  width: 525px;
  height: 155px;
  flex: none;
`;

const TrendTitle = styled.text`
  font-family: "DejaVu Sans", Verdana, sans-serif;
  font-size: 17px;
  fill: #444;
  text-anchor: middle;
`;

const GridLine = styled.line`
  stroke: #ebebeb;
  stroke-width: 1;
`;

const ZeroLine = styled.line`
  stroke: #444;
  stroke-width: 1;
`;

const MapFrame = styled.div`
  position: relative;
  width: 1051px;
  height: 600px;
  overflow: hidden;
  background: #f1eee8;
`;

const MapSvg = styled.svg`
  display: block;
  width: 1051px;
  height: 600px;
`;

const Road = styled.path<{ $color: string; $width: number }>`
  fill: none;
  stroke: ${(p) => p.$color};
  stroke-width: ${(p) => p.$width};
  stroke-linejoin: round;
`;

const TownMark = styled.circle`
  fill: #fff;
  stroke: #555;
  stroke-width: 0.8;
`;

const CityLabel = styled.text<{ $big?: boolean }>`
  font-family: "Noto Sans", "Open Sans", sans-serif;
  font-size: ${(p) => (p.$big ? "14.5px" : "12.5px")};
  fill: #444;
  stroke: #fff;
  stroke-width: 2.4px;
  stroke-opacity: 0.75;
  paint-order: stroke;
  text-anchor: middle;
`;

const LakeLabel = styled.text`
  font-family: "Noto Sans", "Open Sans", sans-serif;
  font-style: italic;
  font-size: 15px;
  fill: #4f7fb0;
  stroke: #a0cddb;
  stroke-width: 2px;
  paint-order: stroke;
  text-anchor: middle;
`;

const StateShape = styled.path`
  fill: #e28dd9;
  fill-opacity: 0.84;
  stroke: #4e3a52;
  stroke-width: 1;
  stroke-opacity: 0.75;
`;

const ShadeShape = styled.path`
  fill: #7f8a70;
  fill-opacity: 0.25;
`;

const CountyLine = styled.path`
  fill: none;
  stroke: #4e3a52;
  stroke-width: 1.1;
  stroke-opacity: 0.85;
`;

const ZoomBar = styled.div`
  position: absolute;
  left: 11px;
  top: 11px;
  border: 2px solid rgba(0, 0, 0, 0.2);
  border-radius: 4px;
  overflow: hidden;
`;

const ZoomButton = styled.div`
  width: 28px;
  height: 28px;
  background: #fff;
  color: #000;
  text-align: center;
  font-family: "Liberation Mono", monospace;
  font-weight: bold;
  font-size: 22px;
  line-height: 28px;
  &:first-child {
    border-bottom: 1px solid #ccc;
  }
`;

const Popup = styled.div`
  position: absolute;
  left: 374px;
  top: 327px;
  width: 227px;
  height: 112px;
  box-sizing: border-box;
  padding: 13px 19px;
  background: #fff;
  border-radius: 12px;
  box-shadow: 0 3px 14px rgba(0, 0, 0, 0.4);
  font-size: 12px;
  line-height: 17px;
  color: #333;
  &::after {
    content: "";
    position: absolute;
    left: 104px;
    bottom: -8px;
    width: 17px;
    height: 17px;
    background: #fff;
    transform: rotate(45deg) scale(0.8);
  }
`;

const PopupClose = styled.div`
  position: absolute;
  right: 5px;
  top: 3px;
  font-size: 18px;
  line-height: 16px;
  font-weight: bold;
  color: #c3c3c3;
`;

const Attribution = styled.div`
  position: absolute;
  right: 0;
  bottom: 0;
  padding: 0 5px;
  height: 17px;
  font-size: 11px;
  line-height: 17px;
  color: #333;
  background: rgba(255, 255, 255, 0.8);
`;

const AttrLink = styled.span`
  color: #0078a8;
`;
